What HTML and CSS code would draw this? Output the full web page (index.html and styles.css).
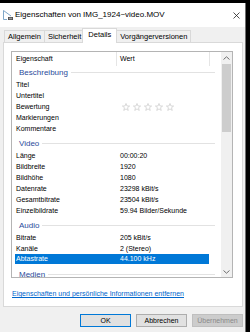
FILE: index.html
```html
<!DOCTYPE html>
<html lang="de">
<head>
<meta charset="utf-8">
<title>Eigenschaften von IMG_1924~video.MOV</title>
<link rel="stylesheet" href="styles.css">
</head>
<body>
<div class="screen">
  <div class="window">
    <div class="titlebar">
      <svg class="appicon" width="12" height="12" viewBox="0 0 12 12">
        <path d="M1.5 1.5 L1.5 10.5 L5 10.5 M1.5 1.5 L9 7" fill="none" stroke="#7fa7c9" stroke-width="1"/>
        <rect x="6" y="8" width="5" height="3" fill="#4a4a4a"/>
        <rect x="6.8" y="8.7" width="3.4" height="1.6" fill="#9a9a9a"/>
      </svg>
      <span class="title">Eigenschaften von IMG_1924~video.MOV</span>
      <svg class="close" width="7" height="7" viewBox="0 0 7 7">
        <path d="M0.5 0.5 L6.5 6.5 M6.5 0.5 L0.5 6.5" stroke="#222" stroke-width="0.8" fill="none"/>
      </svg>
    </div>
    <div class="content">
      <div class="tabs">
        <div class="tab">Allgemein</div>
        <div class="tab">Sicherheit</div>
        <div class="tab active">Details</div>
        <div class="tab">Vorgängerversionen</div>
      </div>
      <div class="panel">
        <div class="list">
          <div class="list-main">
            <div class="header">
              <div class="hcell c1">Eigenschaft</div>
              <div class="hcell c2">Wert</div>
              <div class="hcell c3"></div>
            </div>
            <div class="group first"><span class="gname">Beschreibung</span><i class="rule"></i></div>
            <div class="row"><span class="k">Titel</span><span class="v"></span></div>
            <div class="row"><span class="k">Untertitel</span><span class="v"></span></div>
            <div class="row"><span class="k">Bewertung</span>
              <span class="v stars">
                <svg class="star" width="8" height="8" viewBox="0 0 10 10"><polygon points="5,0.6 6.2,3.7 9.5,3.8 6.9,5.9 7.8,9.3 5,7.4 2.2,9.3 3.1,5.9 0.5,3.8 3.8,3.7" fill="none" stroke="#c4c4c4" stroke-width="0.8"/></svg>
                <svg class="star" width="8" height="8" viewBox="0 0 10 10"><polygon points="5,0.6 6.2,3.7 9.5,3.8 6.9,5.9 7.8,9.3 5,7.4 2.2,9.3 3.1,5.9 0.5,3.8 3.8,3.7" fill="none" stroke="#c4c4c4" stroke-width="0.8"/></svg>
                <svg class="star" width="8" height="8" viewBox="0 0 10 10"><polygon points="5,0.6 6.2,3.7 9.5,3.8 6.9,5.9 7.8,9.3 5,7.4 2.2,9.3 3.1,5.9 0.5,3.8 3.8,3.7" fill="none" stroke="#c4c4c4" stroke-width="0.8"/></svg>
                <svg class="star" width="8" height="8" viewBox="0 0 10 10"><polygon points="5,0.6 6.2,3.7 9.5,3.8 6.9,5.9 7.8,9.3 5,7.4 2.2,9.3 3.1,5.9 0.5,3.8 3.8,3.7" fill="none" stroke="#c4c4c4" stroke-width="0.8"/></svg>
                <svg class="star" width="8" height="8" viewBox="0 0 10 10"><polygon points="5,0.6 6.2,3.7 9.5,3.8 6.9,5.9 7.8,9.3 5,7.4 2.2,9.3 3.1,5.9 0.5,3.8 3.8,3.7" fill="none" stroke="#c4c4c4" stroke-width="0.8"/></svg>
              </span>
            </div>
            <div class="row"><span class="k">Markierungen</span><span class="v"></span></div>
            <div class="row"><span class="k">Kommentare</span><span class="v"></span></div>
            <div class="group"><span class="gname">Video</span><i class="rule"></i></div>
            <div class="row"><span class="k">Länge</span><span class="v">00:00:20</span></div>
            <div class="row"><span class="k">Bildbreite</span><span class="v">1920</span></div>
            <div class="row"><span class="k">Bildhöhe</span><span class="v">1080</span></div>
            <div class="row"><span class="k">Datenrate</span><span class="v">23298 kBit/s</span></div>
            <div class="row"><span class="k">Gesamtbitrate</span><span class="v">23504 kBit/s</span></div>
            <div class="row"><span class="k">Einzelbildrate</span><span class="v">59.94 Bilder/Sekunde</span></div>
            <div class="group"><span class="gname">Audio</span><i class="rule"></i></div>
            <div class="row"><span class="k">Bitrate</span><span class="v">205 kBit/s</span></div>
            <div class="row"><span class="k">Kanäle</span><span class="v">2 (Stereo)</span></div>
            <div class="row selected"><span class="k">Abtastrate</span><span class="v">44.100 kHz</span></div>
            <div class="group"><span class="gname">Medien</span><i class="rule"></i></div>
          </div>
          <div class="scrollbar">
            <div class="sb-btn">
              <svg width="7" height="4" viewBox="0 0 7 4"><path d="M0.5 3.5 L3.5 0.8 L6.5 3.5" fill="none" stroke="#606060" stroke-width="0.9"/></svg>
            </div>
            <div class="sb-track"><div class="sb-thumb"></div></div>
            <div class="sb-btn">
              <svg width="7" height="4" viewBox="0 0 7 4"><path d="M0.5 0.5 L3.5 3.2 L6.5 0.5" fill="none" stroke="#606060" stroke-width="0.9"/></svg>
            </div>
          </div>
        </div>
        <a class="link" href="#">Eigenschaften und persönliche Informationen entfernen</a>
      </div>
      <div class="buttons">
        <div class="btn default">OK</div>
        <div class="btn">Abbrechen</div>
        <div class="btn disabled">Übernehmen</div>
      </div>
    </div>
  </div>
</div>
</body>
</html>
```
FILE: styles.css
```css
html, body {
  margin: 0;
  padding: 0;
  background: #000;
}
.screen {
  width: 250px;
  height: 332px;
  box-sizing: border-box;
  padding-top: 3px;
  overflow: hidden;
  background: #000;
  display: flex;
  font-family: "Liberation Sans", Arial, sans-serif;
  color: #000;
}
.window {
  width: 246px;
  height: 340px;
  box-sizing: border-box;
  background: #f0f0f0;
  border-right: 1px solid #6f6f6f;
  display: flex;
  flex-direction: column;
}
.titlebar {
  height: 24px;
  flex: none;
  background: #fff;
  display: flex;
  align-items: center;
  padding-left: 2px;
}
.appicon {
  flex: none;
  margin-right: 1px;
}
.title {
  font-size: 8px;
  line-height: 10px;
  white-space: nowrap;
}
.close {
  margin-left: auto;
  margin-right: 5px;
  flex: none;
}
.content {
  padding: 1px 2px 0 3px;
  display: flex;
  flex-direction: column;
}
.tabs {
  display: flex;
  align-items: flex-end;
  height: 14px;
  padding-left: 1px;
}
.tab {
  height: 12px;
  box-sizing: border-box;
  border: 1px solid #d9d9d9;
  border-bottom: none;
  background: #f0f0f0;
  font-size: 7.5px;
  line-height: 11px;
  padding: 0 3px;
  margin-right: -1px;
  white-space: nowrap;
}
.tab.active {
  height: 15px;
  background: #fff;
  margin: 0 -1px -1px -2px;
  padding: 0 5px;
  line-height: 12px;
  position: relative;
  z-index: 1;
}
.panel {
  width: 240px;
  height: 265px;
  box-sizing: border-box;
  background: #fff;
  border: 1px solid #d9d9d9;
  padding: 8px 0 0 7px;
  display: flex;
  flex-direction: column;
}
.list {
  width: 222px;
  height: 227px;
  flex: none;
  box-sizing: border-box;
  border: 1px solid #b4b4b4;
  display: flex;
  overflow: hidden;
}
.list-main {
  flex: 1;
  overflow: hidden;
  font-size: 7px;
}
.header {
  height: 14px;
  display: flex;
  line-height: 14px;
}
.hcell {
  box-sizing: border-box;
  white-space: nowrap;
}
.c1 {
  width: 104px;
  padding-left: 4px;
}
.c2 {
  width: 93px;
  padding-left: 3px;
  border-left: 1px solid #e5e5e5;
}
.c3 {
  flex: 1;
  border-left: 1px solid #e5e5e5;
}
.group {
  height: 16px;
  box-sizing: border-box;
  padding: 2px 6px 0 7px;
  display: flex;
  align-items: center;
}
.group.first {
  height: 13px;
  padding-top: 0;
}
.gname {
  font-size: 8px;
  line-height: 13px;
  color: #2b4b9b;
  white-space: nowrap;
}
.rule {
  flex: 1;
  height: 1px;
  background: #e2e2e2;
  margin-left: 3px;
}
.row {
  height: 11px;
  margin: 0 12px 0 3px;
  display: flex;
  align-items: center;
  line-height: 11px;
  white-space: nowrap;
}
.row .k {
  width: 101px;
  padding-left: 1px;
  box-sizing: border-box;
  flex: none;
}
.row .v {
  padding-left: 4px;
}
.row.selected {
  height: 10px;
  margin-bottom: 1px;
  background: #0078d7;
  color: #fff;
  line-height: 10px;
}
.stars {
  display: flex;
  gap: 3px;
  padding-left: 6px !important;
  align-items: center;
}
.star {
  display: block;
}
.scrollbar {
  width: 11px;
  flex: none;
  background: #f0f0f0;
  display: flex;
  flex-direction: column;
}
.sb-btn {
  height: 11px;
  flex: none;
  display: flex;
  align-items: center;
  justify-content: center;
}
.sb-btn svg {
  display: block;
}
.sb-track {
  flex: 1;
  padding: 1px 1px 0 1px;
}
.sb-thumb {
  height: 68px;
  background: #cdcdcd;
}
.link {
  margin-top: 11px;
  padding-left: 1px;
  font-size: 7px;
  line-height: 10px;
  color: #0066cc;
  text-decoration: underline;
  white-space: nowrap;
  align-self: flex-start;
}
.buttons {
  margin-top: 7px;
  display: flex;
  justify-content: flex-end;
  gap: 5px;
}
.btn {
  width: 51px;
  height: 13px;
  box-sizing: border-box;
  border: 1px solid #adadad;
  background: #e1e1e1;
  font-size: 7px;
  line-height: 11px;
  text-align: center;
  white-space: nowrap;
}
.btn.default {
  border-color: #0078d7;
}
.btn.disabled {
  background: #cccccc;
  border-color: #bfbfbf;
  color: #8a8a8a;
}
```
